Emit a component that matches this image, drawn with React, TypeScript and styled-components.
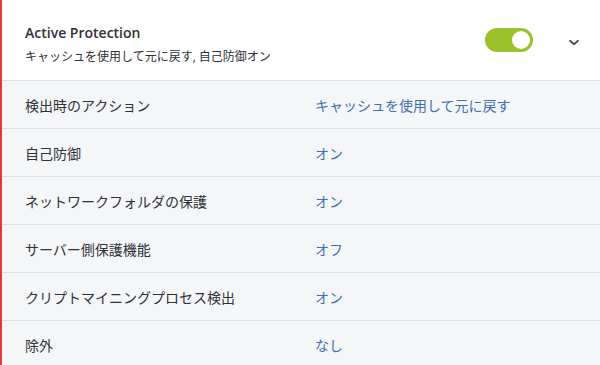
import React, { useState } from "react";
import styled, { createGlobalStyle } from "styled-components";

const GlobalStyle = createGlobalStyle`
  html, body {
    margin: 0;
    padding: 0;
    background: #f5f6f8;
  }
  body {
    font-family: "Open Sans", "Noto Sans CJK JP", sans-serif;
    color: #2e3138;
  }
`;

interface Setting {
  label: string;
  value: string;
}

const settings: Setting[] = [
  { label: "検出時のアクション", value: "キャッシュを使用して元に戻す" },
  { label: "自己防御", value: "オン" },
  { label: "ネットワークフォルダの保護", value: "オン" },
  { label: "サーバー側保護機能", value: "オフ" },
  { label: "クリプトマイニングプロセス検出", value: "オン" },
  { label: "除外", value: "なし" },
];

const Panel = styled.div`
  width: 600px;
  height: 365px;
  overflow: hidden;
  border-left: 2px solid #e0393e;
  box-sizing: border-box;
  background: #f5f6f8;
`;

const Header = styled.div`
  display: flex;
  align-items: center;
  height: 80px;
  padding: 0 20px 0 23px;
  background: #ffffff;
  border-bottom: 1px solid #dcdee2;
`;

const HeaderText = styled.div`
  flex: 1;
  display: flex;
  flex-direction: column;
  gap: 5px;
  padding-top: 8px;
`;

const Title = styled.div`
  font-size: 14px;
  font-weight: 600;
  line-height: 20px;
  color: #2e3138;
`;

const Subtitle = styled.div`
  font-size: 12px;
  line-height: 18px;
  color: #2e3138;
`;

const Toggle = styled.button<{ $on: boolean }>`
  position: relative;
  width: 48px;
  height: 24px;
  border: none;
  padding: 0;
  border-radius: 12px;
  background: ${(p) => (p.$on ? "#9cc22a" : "#c4c7cc")};
  cursor: pointer;
  margin-right: 35px;

  &::after {
    content: "";
    position: absolute;
    top: 3px;
    left: ${(p) => (p.$on ? "27px" : "3px")};
    width: 18px;
    height: 18px;
    border-radius: 50%;
    background: #ffffff;
  }
`;

const Chevron = styled.div`
  width: 12px;
  display: flex;
  justify-content: center;
  color: #474d5a;
  margin-top: 4px;
`;

const Row = styled.div`
  display: flex;
  align-items: center;
  height: 47px;
  padding-left: 23px;
  border-bottom: 1px solid #dcdee2;
  font-size: 14px;
`;

const Label = styled.div`
  width: 290px;
  color: #2e3138;
`;

const Value = styled.div`
  color: #3f6db4;
`;

export default function App() {
  const [on, setOn] = useState(true);

  return (
    <>
      <GlobalStyle />
      <Panel>
        <Header>
          <HeaderText>
            <Title>Active Protection</Title>
            <Subtitle>キャッシュを使用して元に戻す, 自己防御オン</Subtitle>
          </HeaderText>
          <Toggle $on={on} onClick={() => setOn(!on)} aria-label="toggle" />
          <Chevron>
            <svg width="10" height="5" viewBox="0 0 10 5">
              <path
                d="M1 0.8l4 3.4 4-3.4"
                fill="none"
                stroke="currentColor"
                strokeWidth="1.8"
                strokeLinecap="round"
                strokeLinejoin="round"
              />
            </svg>
          </Chevron>
        </Header>
        {settings.map((s) => (
          <Row key={s.label}>
            <Label>{s.label}</Label>
            <Value>{s.value}</Value>
          </Row>
        ))}
      </Panel>
    </>
  );
}
